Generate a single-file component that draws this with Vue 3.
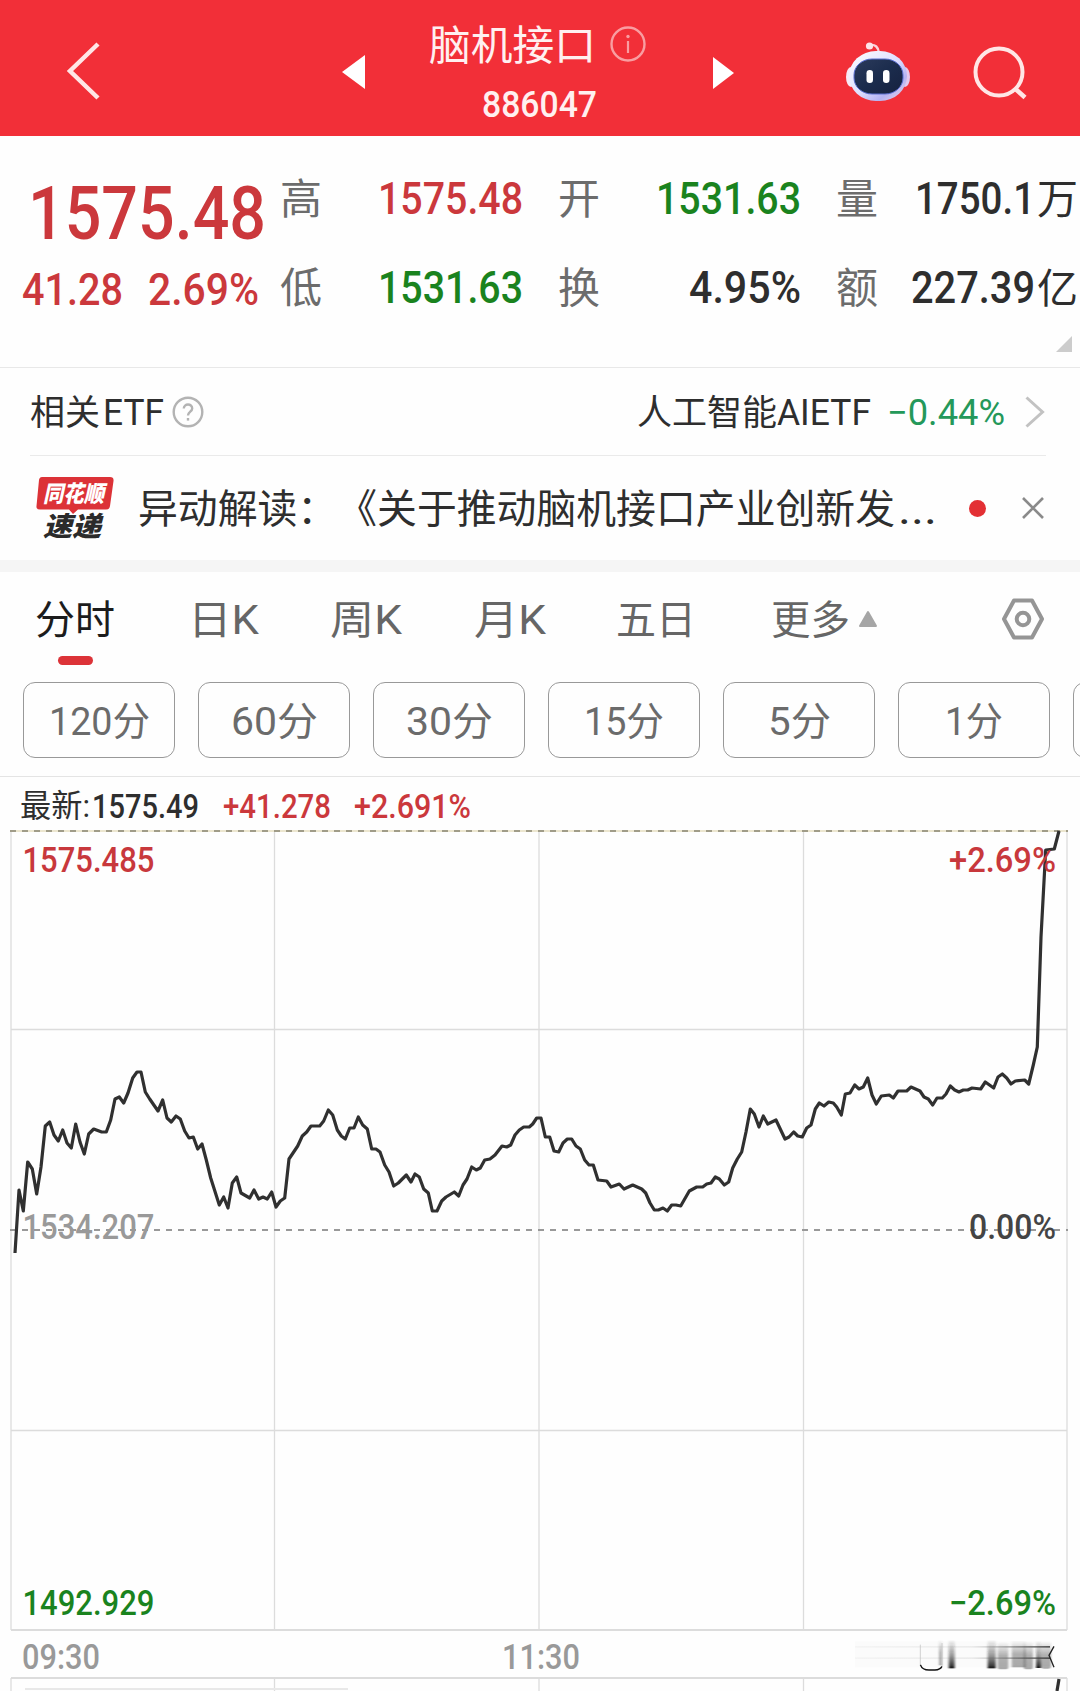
<script setup>
import { h } from "vue";

// text squeezed to a fixed width, centred on its own box
const FitText = (props) =>
  h("svg", { class: "fit", width: props.w, height: props.size }, [
    h(
      "text",
      {
        x: 0,
        y: props.size * 0.856 + 0.6,
        "font-size": props.size,
        textLength: props.w,
        lengthAdjust: "spacingAndGlyphs",
        fill: "currentColor",
      },
      props.text
    ),
  ]);
FitText.props = ["text", "w", "size"];

const stats = [
  { label: "高", value: "1575.48", w: 145, color: "red" },
  { label: "开", value: "1531.63", w: 145, color: "green" },
  { label: "量", value: "1750.1", w: 120, unit: "万" },
  { label: "低", value: "1531.63", w: 145, color: "green" },
  { label: "换", value: "4.95%", w: 112 },
  { label: "额", value: "227.39", w: 124, unit: "亿" },
];

const tabs = [
  { text: "分时", w: 80, active: true },
  { text: "日K", w: 71 },
  { text: "周K", w: 72 },
  { text: "月K", w: 72 },
  { text: "五日", w: 80 },
  { text: "更多", w: 79, more: true },
];

const periods = [
  { text: "120分", w: 101 },
  { text: "60分", w: 87 },
  { text: "30分", w: 87 },
  { text: "15分", w: 80 },
  { text: "5分", w: 63 },
  { text: "1分", w: 58 },
  { text: "", w: 0 },
];

const vLines = [11, 274.5, 539, 803.5, 1067];

const points = [
  "15,423 19,360 23.3,381 27.7,332 32.3,339 36.7,364 41,337 45.3,296 49.7,292 54,305 58.3,311 62.7,300 67,313 71.3,318",
  "75.7,294 80,312 84.3,324 88.7,304 93.7,299 101.7,302 106.3,302 110.7,290 115,269 119.3,267 123.7,273 128,263 132.7,248",
  "137,242 141,242 145.3,262 149.7,269 158,281 162.7,270 167,288 171.3,292 176,286 180.3,289 184.7,301 189,308 193.3,307",
  "197.7,319 202,314 206.3,330 210.7,348 219.3,375 223.7,367 228,378 232.3,353 236.7,347 241,363 249.7,368 254,360",
  "258.7,369 263,367 267.3,369 271.7,362 276,377 280.3,371 284.7,368 289,329 297.7,316 302.3,306 306.7,302 311,296",
  "319.7,296 323.7,291 328.3,280 332.7,285 337.3,300 341.3,306 345.3,309 349.7,298 354,298 358.3,287 362.7,295 367.3,299",
  "371.7,319 376,319 380,322 384.7,335 389,342 393.7,356 398.3,353 406.3,345 411,352 415,344 419.3,347 423.7,359",
  "428.3,363 432.3,381 437,381 441.7,371 446,367 454.3,362 458.7,366 463,355 467,349 471.7,337 476.3,340 480.3,338",
  "484.7,330 490,329 495,325 502,316 506.7,317 510.7,315 515,305 519.3,300 523.7,297 529.3,297 532.7,294 536.7,288",
  "541,288 545.3,307 549.7,307 554,321 558.7,322 563,313 567.3,309 571.7,309 576,316 580.3,319 584.7,330 589,335",
  "593.3,335 598,350 606.7,351 611,357 619.3,354 624,359 632.7,355 641.7,359 645.7,363 650,373 654.3,380 658.3,380",
  "663,378 667.3,381 671.7,375 676,375 680.7,376 689.3,361 696.7,357 702.7,357 706.7,354 711,353 715.3,347 719.3,349",
  "724.3,355 728.7,352 732.7,338 737.3,329 741.7,322 746,302 750.3,279 754.3,284 759,297 763.3,286 767.7,294 776,290",
  "785,309 789,307 793.7,302 797.7,306 802.3,307 806.7,298 811,295 815.3,279 819.3,273 824,276 828.7,272 833.3,273",
  "836.7,277 841.3,285 845.3,264 850,263 854.7,255 859,259 863.3,257 867.7,248 872,265 876.3,274 881.3,266 889.3,265",
  "893.3,268 898,261 906.7,261 911,257 920,261 924,267 928.3,269 932.7,275 937,268 942.3,268 946,264 950.3,256",
  "954.7,260 959,262 963.3,260 967.7,260 972,258 980.7,259 985.3,252 993.7,258 998,247 1002.3,244 1006.7,248 1011,254",
  "1015.3,251 1024.7,250 1028.7,254 1033.3,235 1037.3,217 1041,107 1045.7,20 1054.3,19 1059,1",
].join(" ");

const axisLabels = [
  { text: "1575.485", x: 22.5, y: 41.5, w: 132, color: "#c8383c" },
  { text: "+2.69%", x: 949, y: 41.5, w: 107, color: "#c8383c" },
  { text: "1534.207", x: 22.5, y: 409, w: 132, color: "#999" },
  { text: "0.00%", x: 969, y: 409, w: 87, color: "#444" },
  { text: "1492.929", x: 22.5, y: 785, w: 132, color: "#1a831e" },
  { text: "−2.69%", x: 949, y: 785, w: 107, color: "#1a831e" },
];
</script>

<template>
  <div class="page">
    <header class="header">
      <svg class="back" width="40" height="64" viewBox="0 0 40 64">
        <path d="M33 5 L5 32 L33 59" />
      </svg>
      <svg class="prev" width="24" height="36" viewBox="0 0 24 36">
        <path d="M0 18 L23 1 V35 Z" />
      </svg>
      <div class="title">
        <div class="name">
          <FitText text="脑机接口" :w="167" :size="41" />
          <svg class="info" width="38" height="38" viewBox="0 0 38 38">
            <circle cx="19" cy="19" r="16.5" />
            <circle class="dot" cx="19" cy="11.5" r="1.7" />
            <path d="M19 16 V28" />
          </svg>
        </div>
        <FitText class="code" text="886047" :w="115" :size="36" />
      </div>
      <svg class="next" width="24" height="34" viewBox="0 0 24 34">
        <path d="M1 1 L22 17 L1 33 Z" />
      </svg>
      <svg class="robot" width="66" height="62" viewBox="0 0 66 62">
        <defs>
          <linearGradient id="shell" x1="0" y1="0" x2="1" y2="1">
            <stop offset="0" stop-color="#fff" />
            <stop offset="0.5" stop-color="#dfe0ff" />
            <stop offset="0.75" stop-color="#b4b2f2" />
            <stop offset="1" stop-color="#f7dbe6" />
          </linearGradient>
          <linearGradient id="screen" x1="0" y1="0" x2="1" y2="1">
            <stop offset="0" stop-color="#2c3b5c" />
            <stop offset="0.5" stop-color="#1b2c4d" />
            <stop offset="1" stop-color="#16213f" />
          </linearGradient>
        </defs>
        <path d="M25 4 Q33 3 34 12" />
        <circle cx="24.5" cy="5" r="3.6" fill="#fde4ea" />
        <ellipse cx="6" cy="36" rx="5" ry="10" fill="#f8e9f5" />
        <ellipse cx="60" cy="36" rx="5" ry="10" fill="#e3c9ee" />
        <rect x="4" y="10" width="58" height="50" rx="27" ry="25" fill="url(#shell)" />
        <rect x="9" y="18" width="49" height="35" rx="18" ry="16" fill="url(#screen)" stroke="#5a6fd0" stroke-width="1" />
        <rect x="21.5" y="29" width="6.5" height="13" rx="3.2" fill="#fff" />
        <rect x="38" y="29" width="6.5" height="13" rx="3.2" fill="#fff" />
      </svg>
      <svg class="search" width="58" height="58" viewBox="0 0 58 58">
        <circle cx="27" cy="28" r="23.5" />
        <path d="M43.5 45 L53 53.5" />
      </svg>
    </header>

    <section class="quote">
      <div class="price red">
        <FitText class="last" text="1575.48" :w="238" :size="75" />
        <div class="change">
          <FitText text="41.28" :w="101" :size="44" />
          <FitText text="2.69%" :w="111" :size="44" />
        </div>
      </div>
      <div class="stats">
        <div v-for="s in stats" :key="s.label" class="stat">
          <FitText class="label" :text="s.label" :w="42" :size="42" />
          <div class="value" :class="s.color">
            <FitText :text="s.value" :w="s.w" :size="44" />
            <FitText v-if="s.unit" class="unit" :text="s.unit" :w="41" :size="41" />
          </div>
        </div>
      </div>
      <i class="corner"></i>
    </section>

    <section class="etf">
      <FitText text="相关" :w="70" :size="35" />
      <FitText class="latin" text="ETF" :w="61" :size="36" />
      <svg class="help" width="34" height="34" viewBox="0 0 34 34">
        <circle cx="17" cy="17" r="14.3" />
        <path d="M12.8 13.6 C12.8 8.2 21.2 8.2 21.2 13.4 C21.2 16.6 17 16.8 17 20.6" />
        <path d="M17 23 V25.6" />
      </svg>
      <div class="fund">
        <FitText text="人工智能" :w="140" :size="35" />
        <FitText text="AIETF" :w="94" :size="36" />
        <FitText class="pct" text="−0.44%" :w="118" :size="36" />
        <svg class="chevron" width="22" height="34" viewBox="0 0 22 34">
          <path d="M2.5 2.5 L18.5 17 L2.5 31.5" />
        </svg>
      </div>
    </section>

    <section class="news">
      <svg class="logo" width="80" height="64" viewBox="0 0 80 64">
        <path d="M7 1 H75 Q79 1 78.500 5 L75 30 Q74.500 33.500 71 33.500 H43 L38 38 L34 33.500 H5 Q1 33.500 1.500 30 L4 4 Q4.500 1 7 1 Z" fill="#dc3237" />
        <text x="8" y="26" font-size="23" textLength="61" lengthAdjust="spacingAndGlyphs" fill="#fff">同花顺</text>
        <text x="8" y="60" font-size="27" textLength="58" lengthAdjust="spacingAndGlyphs" fill="#2b2b2b">速递</text>
      </svg>
      <FitText text="异动解读：《关于推动脑机接口产业创新发" :w="757" :size="40" />
      <FitText class="dots" text="..." :w="39" :size="42" />
      <i class="unread"></i>
      <svg class="close" width="24" height="24" viewBox="0 0 24 24">
        <path d="M2 2 L22 22 M22 2 L2 22" />
      </svg>
    </section>

    <nav class="tabs">
      <div v-for="t in tabs" :key="t.text" class="tab" :class="{ active: t.active }">
        <FitText :text="t.text" :w="t.w" :size="40" />
        <svg v-if="t.more" class="arrow" width="20" height="18" viewBox="0 0 20 18">
          <path d="M10 2 L18 16 H2 Z" />
        </svg>
      </div>
      <svg class="setting" width="44" height="44" viewBox="0 0 44 44">
        <path d="M13 3.500 H31 L41 22 L31 40.500 H13 L3 22 Z" />
        <circle cx="22" cy="22" r="6.300" />
      </svg>
    </nav>

    <div class="periods">
      <div v-for="p in periods" :key="p.text" class="period">
        <FitText v-if="p.text" :text="p.text" :w="p.w" :size="39" />
      </div>
    </div>

    <div class="latest">
      <FitText class="cjk" text="最新:" :w="70" :size="32" />
      <FitText text="1575.49" :w="107" :size="33" />
      <FitText class="red diff" text="+41.278" :w="108" :size="33" />
      <FitText class="red rate" text="+2.691%" :w="117" :size="33" />
    </div>

    <svg class="chart" width="1080" height="802" viewBox="0 0 1080 802">
      <g stroke="#dcdcdc" stroke-width="1.3">
        <line v-for="x in vLines" :key="x" :x1="x" :x2="x" y1="1" y2="800" />
        <line x1="11" x2="1067" y1="199.500" y2="199.500" />
        <line x1="11" x2="1067" y1="600.500" y2="600.500" />
        <line x1="11" x2="1067" y1="800" y2="800" stroke-width="2" />
      </g>
      <line x1="10" x2="1068" y1="1" y2="1" stroke="#ece6cf" stroke-width="2" />
      <line x1="10" x2="1068" y1="1" y2="1" stroke="#a09c88" stroke-width="2" stroke-dasharray="6 6" />
      <line x1="10" x2="1068" y1="400" y2="400" stroke="#999" stroke-width="1.800" stroke-dasharray="6 6" />
      <polyline :points="points" fill="none" stroke="#303030" stroke-width="3.200" stroke-linejoin="round" />
      <text
        v-for="l in axisLabels"
        :key="l.text"
        :x="l.x"
        :y="l.y"
        :textLength="l.w"
        :fill="l.color"
        font-size="34.5"
        lengthAdjust="spacingAndGlyphs"
      >{{ l.text }}</text>
    </svg>

    <div class="times">
      <FitText text="09:30" :w="78" :size="35" />
      <FitText class="noon" text="11:30" :w="78" :size="35" />
      <svg class="smear" width="200" height="35" viewBox="0 0 600 105">
        <defs>
          <linearGradient id="dark" x1="0" y1="0" x2="0" y2="1">
            <stop offset="0" stop-color="#222" stop-opacity="0" />
            <stop offset="0.6" stop-color="#222" stop-opacity="0.5" />
            <stop offset="1" stop-color="#111" stop-opacity="0.95" />
          </linearGradient>
          <linearGradient id="mid" x1="0" y1="0" x2="0" y2="1">
            <stop offset="0" stop-color="#555" stop-opacity="0" />
            <stop offset="0.5" stop-color="#555" stop-opacity="0.45" />
            <stop offset="1" stop-color="#555" stop-opacity="0.5" />
          </linearGradient>
          <linearGradient id="streak">
            <stop offset="0" stop-color="#777" stop-opacity="0.05" />
            <stop offset="0.6" stop-color="#777" stop-opacity="0.12" />
            <stop offset="1" stop-color="#333" stop-opacity="0.8" />
          </linearGradient>
          <filter id="soft" x="-10%" y="-10%" width="120%" height="120%">
            <feGaussianBlur stdDeviation="3 1" />
          </filter>
        </defs>
        <rect x="0" y="10" width="590" height="78" fill="#999" opacity="0.03" />
        <g filter="url(#soft)">
          <rect x="252" y="6" width="9" height="76" fill="url(#mid)" />
          <rect x="281" y="5" width="18" height="86" fill="url(#dark)" />
          <rect x="398" y="5" width="24" height="86" fill="url(#dark)" />
          <rect x="428" y="12" width="32" height="82" rx="8" fill="url(#mid)" />
          <rect x="470" y="8" width="42" height="80" fill="url(#mid)" />
          <rect x="506" y="10" width="28" height="84" rx="8" fill="url(#mid)" />
          <rect x="543" y="8" width="15" height="82" fill="url(#dark)" />
          <rect x="558" y="10" width="30" height="82" rx="8" fill="url(#mid)" />
        </g>
        <rect x="0" y="24" width="585" height="5" fill="url(#streak)" />
        <rect x="0" y="58" width="585" height="5" fill="url(#streak)" />
        <path d="M196 80 Q202 96 222 96 H240 Q256 95 261 85" fill="none" stroke="#111" stroke-width="4" />
        <path d="M196 20 V80 M261 15 V85" stroke="#bbb" stroke-width="2" />
        <path d="M597 25 L582 52 L597 88" fill="none" stroke="#222" stroke-width="4" />
      </svg>
    </div>

    <svg class="volume" width="1080" height="14" viewBox="0 0 1080 14">
      <g stroke="#dcdcdc" stroke-width="1.300">
        <line x1="11" x2="1067" y1="1" y2="1" stroke-width="2" />
        <line v-for="x in vLines" :key="x" :x1="x" :x2="x" y1="1" y2="14" />
        <line x1="25" x2="348" y1="12" y2="12" stroke="#e8e8e8" stroke-width="2" />
      </g>
      <path d="M1059 2 L1057 14" stroke="#303030" stroke-width="3.200" />
    </svg>
  </div>
</template>

<style>
body {
  margin: 0;
  background: #fff;
}
</style>

<style scoped>
.page {
  width: 1080px;
  height: 1691px;
  overflow: hidden;
  background: #fefefe;
  color: #2e2e2e;
  font-family: Roboto, "Noto Sans CJK SC", sans-serif;
  text-spacing-trim: space-all;
}
svg {
  display: block;
  flex: none;
  overflow: visible;
}
.red {
  color: #cb383c;
}
.green {
  color: #1a831e;
}

.header {
  height: 136px;
  display: flex;
  align-items: center;
  box-sizing: border-box;
  padding: 6px 50px 0 65px;
  background: #f22f38;
  color: #fff0f0;
}
.header path {
  fill: none;
  stroke: #ffe6e6;
  stroke-width: 4.5;
}
.header .prev path,
.header .next path {
  fill: #fff;
  stroke: none;
}
.prev {
  margin: 2px 0 0 237px;
}
.title {
  width: 182px;
  margin: 3px 0 0 63px;
  display: flex;
  flex-direction: column;
  gap: 21px;
}
.name {
  display: flex;
  align-items: center;
  gap: 13px;
  height: 41px;
}
.info circle {
  fill: none;
  stroke: #f99da1;
  stroke-width: 2.4;
}
.header .info .dot {
  fill: #f99da1;
  stroke: none;
}
.header .info path {
  stroke: #f99da1;
  stroke-width: 2.2;
}
.code {
  margin-left: 53px;
  font-weight: 500;
}
.next {
  margin: 4px 0 0 101px;
}
.robot {
  margin: 1px 0 0 109px;
}
.header .robot path {
  stroke: #fbd3dc;
  stroke-width: 2.4;
}
.search {
  margin: 4px 0 0 61px;
}
.search circle {
  fill: none;
  stroke: #ffe6e6;
  stroke-width: 4;
}

.quote {
  position: relative;
  display: flex;
  height: 231px;
  border-bottom: 1px solid #e8e8e8;
  font-weight: 500;
}
.price {
  width: 280px;
}
.last {
  margin: 38px 0 0 28px;
}
.change {
  display: flex;
  justify-content: space-between;
  width: 237px;
  margin: 18px 0 0 22px;
}
.stats {
  display: grid;
  grid-template-columns: repeat(3, 243px);
  grid-template-rows: 44px 44px;
  gap: 45px 35px;
  padding-top: 40px;
}
.stat,
.value {
  display: flex;
  align-items: center;
}
.stat {
  justify-content: space-between;
}
.label {
  color: #6c6c6c;
  font-weight: 400;
}
.unit {
  font-weight: 400;
}
.value .unit {
  margin: 0 1px 0 2px;
}
.corner {
  position: absolute;
  right: 8px;
  bottom: 15px;
  border-style: solid;
  border-width: 0 0 16px 16px;
  border-color: transparent transparent #ccc;
}

.etf {
  display: flex;
  align-items: center;
  height: 87px;
  margin: 0 34px 0 30px;
  border-bottom: 1px solid #eaeaea;
}
.latin {
  margin-left: 3px;
}
.help {
  margin-left: 7px;
}
.help circle,
.help path {
  fill: none;
  stroke: #b3b3b3;
  stroke-width: 2.4;
}
.fund {
  display: flex;
  align-items: center;
  margin-left: auto;
}
.pct {
  margin: 0 19px 0 16px;
  color: #24985a;
}
.chevron path {
  fill: none;
  stroke: #c2c2c2;
  stroke-width: 3;
}

.news {
  display: flex;
  align-items: center;
  height: 104px;
  padding-left: 35px;
  border-bottom: 12px solid #f5f5f5;
}
.logo {
  margin-right: 23px;
  font-weight: 900;
  font-style: italic;
}
.dots {
  margin-left: 3px;
}
.unread {
  width: 17px;
  height: 17px;
  margin: 0 35px 0 32px;
  border-radius: 50%;
  background: #e33034;
}
.close path {
  stroke: #8a8a8a;
  stroke-width: 2.6;
}

.tabs {
  display: grid;
  grid-template-columns: 153px 142px 144px 142px 155px 230px 44px;
  align-items: center;
  height: 94px;
  padding-left: 35px;
  color: #666;
}
.tab {
  position: relative;
  display: flex;
  align-items: center;
}
.tab.active {
  color: #1c1c1c;
}
.tab.active::after {
  content: "";
  position: absolute;
  left: 23px;
  top: 57px;
  width: 35px;
  height: 9px;
  border-radius: 5px;
  background: #dc3338;
}
.arrow {
  margin-left: 8px;
}
.arrow path {
  fill: #a6a6a6;
  stroke: #a6a6a6;
  stroke-width: 2;
  stroke-linejoin: round;
}
.setting {
  fill: none;
  stroke: #959595;
  stroke-width: 4;
  stroke-linejoin: round;
}

.periods {
  display: flex;
  gap: 23px;
  height: 76px;
  padding: 16px 0 18px 23px;
  border-bottom: 1px solid #e4e4e4;
  color: #6b6b6b;
}
.period {
  flex: none;
  display: flex;
  align-items: center;
  justify-content: center;
  box-sizing: border-box;
  width: 152px;
  border: 1px solid #999;
  border-radius: 12px;
}

.latest {
  display: flex;
  align-items: center;
  height: 53px;
  padding: 3px 0 0 20px;
  box-sizing: border-box;
  font-weight: 500;
}
.latest .cjk {
  font-weight: 400;
  margin-right: 2px;
}
.diff {
  margin-left: 24px;
}
.rate {
  margin-left: 23px;
}

.chart {
  font-weight: 500;
}
.times {
  display: flex;
  align-items: center;
  height: 45px;
  padding: 2px 25px 0 22px;
  box-sizing: border-box;
  color: #999;
  font-weight: 500;
}
.noon {
  margin-left: 402px;
}
.smear {
  margin-left: auto;
}
</style>
